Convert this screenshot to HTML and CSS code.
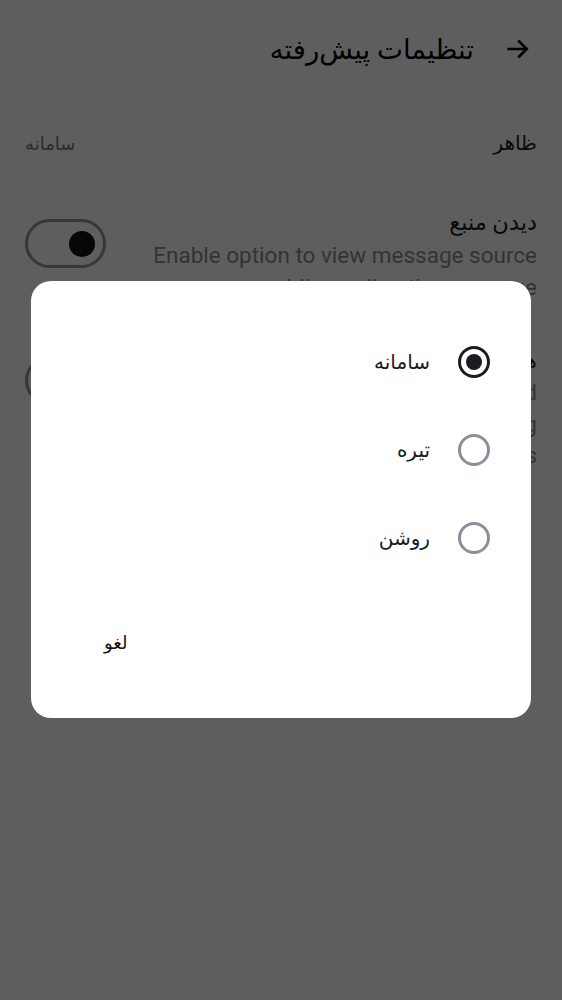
FILE: index.html
```html
<!DOCTYPE html>
<html lang="fa" dir="rtl">
<head>
<meta charset="utf-8">
<link rel="stylesheet" href="styles.css">
</head>
<body>
<div class="page">
  <header class="topbar">
    <svg class="back" width="28" height="28" viewBox="0 0 24 24"><path d="M4 12h15M13 5.5l6.5 6.5-6.5 6.5" fill="none" stroke="#000" stroke-width="2.2" stroke-linecap="square"/></svg>
    <h1 class="title">تنظیمات پیش‌رفته</h1>
  </header>

  <div class="row appearance">
    <span class="row-title small">ظاهر</span>
    <span class="row-value">سامانه</span>
  </div>

  <div class="row setting">
    <div class="texts">
      <div class="row-title">دیدن منبع</div>
      <div class="desc" dir="ltr">Enable option to view message source while reading the message</div>
    </div>
    <div class="toggle on"><span class="knob"></span></div>
  </div>

  <div class="row setting">
    <div class="texts">
      <div class="row-title">همگام‌سازی</div>
      <div class="desc" dir="ltr">Load remote images in a message and<br>show them when reading and sending<br>messages, even for unknown contacts</div>
    </div>
    <div class="toggle"><span class="knob"></span></div>
  </div>
</div>

<div class="scrim"></div>

<div class="dialog">
  <div class="options">
    <div class="option">
      <span class="radio checked"><span class="dot"></span></span>
      <span class="opt-label">سامانه</span>
    </div>
    <div class="option">
      <span class="radio"></span>
      <span class="opt-label">تیره</span>
    </div>
    <div class="option">
      <span class="radio"></span>
      <span class="opt-label">روشن</span>
    </div>
  </div>
  <div class="actions">
    <span class="cancel">لغو</span>
  </div>
</div>
</body>
</html>
```
FILE: styles.css
```css
html, body {
  margin: 0;
  padding: 0;
  background: #fff;
}
body {
  font-family: Roboto, "DejaVu Sans", sans-serif;
  color: #1b1b1f;
  width: 562px;
  height: 1000px;
  overflow: hidden;
}
.page {
  padding: 0 25px;
}
.topbar {
  display: flex;
  align-items: center;
  height: 98px;
  gap: 30px;
  padding-right: 5px;
}
.back {
  flex: none;
}
.title {
  margin: 0;
  font-weight: 400;
  font-size: 27.5px;
  color: #000;
}
.row {
  display: flex;
  justify-content: space-between;
  align-items: center;
}
.appearance {
  height: 90px;
}
.row-title {
  font-size: 22.5px;
  line-height: 28px;
  color: #1b1b1f;
}
.row-title.small {
  font-size: 20px;
}
.row-value {
  font-size: 18px;
  color: #74777f;
}
.setting {
  padding: 20px 0 22px;
  gap: 40px;
  align-items: flex-start;
}
.texts {
  flex: 1;
  min-width: 0;
  text-align: right;
}
.desc {
  margin-top: 4px;
  font-size: 22.5px;
  line-height: 31.5px;
  color: #8a8c92;
  text-align: right;
}
.toggle {
  flex: none;
  margin-top: 11px;
  width: 81px;
  height: 49px;
  border: 3px solid #8e95a3;
  border-radius: 26px;
  display: flex;
  align-items: center;
  justify-content: flex-start;
  padding: 0 12px;
  box-sizing: border-box;
  direction: ltr;
}
.toggle .knob {
  width: 18px;
  height: 18px;
  border-radius: 50%;
  background: #8e95a3;
}
.toggle.on {
  justify-content: flex-end;
  padding: 0 8px;
}
.toggle.on .knob {
  width: 26px;
  height: 26px;
  background: #111;
}
.scrim {
  position: fixed;
  inset: 0;
  background: rgba(0, 0, 0, 0.63);
}
.dialog {
  position: fixed;
  left: 31px;
  top: 281px;
  width: 500px;
  height: 437px;
  background: #fff;
  border-radius: 20px;
  display: flex;
  flex-direction: column;
  box-sizing: border-box;
  padding: 37px 41px 0 41px;
}
.options {
  display: flex;
  flex-direction: column;
}
.option {
  display: flex;
  align-items: center;
  gap: 28px;
  height: 88px;
}
.radio {
  width: 26px;
  height: 26px;
  border: 3px solid #8a9099;
  border-radius: 50%;
  display: flex;
  align-items: center;
  justify-content: center;
}
.radio.checked {
  border-color: #1b1b20;
}
.radio .dot {
  width: 16px;
  height: 16px;
  border-radius: 50%;
  background: #1b1b20;
}
.opt-label {
  font-size: 20px;
  color: #1b1b1f;
}
.actions {
  display: flex;
  justify-content: flex-end;
  padding-top: 50px;
  padding-left: 32px;
}
.cancel {
  font-size: 18px;
  color: #111;
}
```
